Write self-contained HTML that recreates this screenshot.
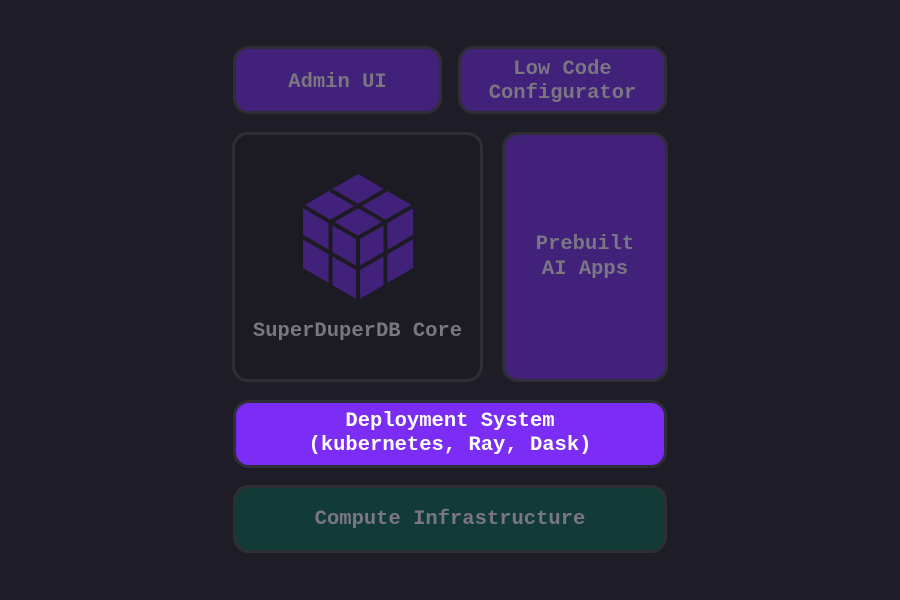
<!DOCTYPE html>
<html><head><style>
body{margin:0;width:900px;height:600px;background:#1e1d27;position:relative;overflow:hidden;font-family:"Liberation Mono",monospace;}
.b{position:absolute;box-sizing:border-box;border:3px solid #2f2e37;border-radius:16px;display:flex;align-items:center;justify-content:center;text-align:center;color:#7a7682;font-size:20.5px;font-weight:bold;line-height:24px;}
.p{background:#42217a;}
</style></head><body>
<div class="b p" style="left:233px;top:46px;width:209px;height:68px;padding-top:5px;">Admin UI</div>
<div class="b p" style="left:458px;top:46px;width:209px;height:68px;padding-top:4px;">Low Code<br>Configurator</div>
<div class="b" style="left:232px;top:132px;width:251px;height:250px;background:#1c1b23;align-items:flex-end;padding-bottom:35px;">SuperDuperDB Core</div>
<div class="b p" style="left:502px;top:132px;width:166px;height:250px;padding-bottom:0px;line-height:25px;">Prebuilt<br>AI Apps</div>
<div class="b" style="left:233px;top:400px;width:434px;height:68px;background:#7b2cf5;color:#fff;">Deployment System<br>(kubernetes, Ray, Dask)</div>
<div class="b" style="left:233px;top:485px;width:434px;height:68px;background:#123b37;padding-top:2px;">Compute Infrastructure</div>
<svg style="position:absolute;left:0;top:0" width="900" height="600">
<polygon points="358,174 413,206 413,268 358,300 303,268 303,206" fill="#42217a"/>
<g stroke="#1c1b23" stroke-width="4" fill="none">
<polyline points="303,206 358,238 413,206"/>
<line x1="358" y1="238" x2="358" y2="302"/>
<line x1="330.5" y1="190" x2="385.5" y2="222"/>
<line x1="385.5" y1="190" x2="330.5" y2="222"/>
<line x1="330.5" y1="222" x2="330.5" y2="286"/>
<line x1="385.5" y1="222" x2="385.5" y2="286"/>
<line x1="301" y1="236" x2="358" y2="269"/>
<line x1="358" y1="269" x2="415" y2="236"/>
</g>
</svg>
</body></html>
